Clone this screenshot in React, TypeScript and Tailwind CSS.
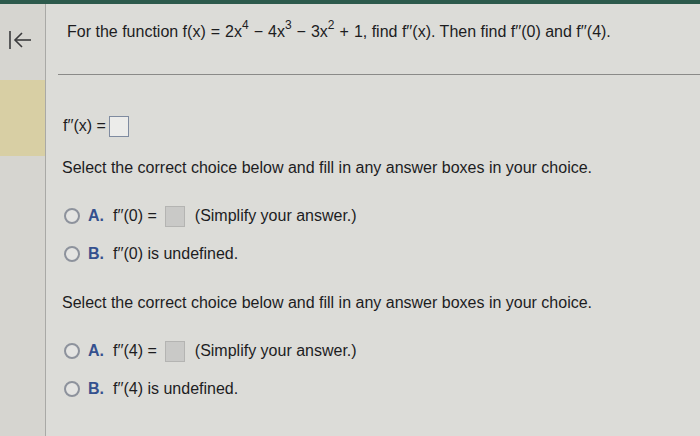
import React from "react"

type Choice = { letter: string; expr: string; box?: boolean; rest: string }

const font = { fontFamily: '"Liberation Sans", Arial, sans-serif' }

const Radio = () => (
  <span className="inline-block w-[16px] h-[16px] rounded-full border-2 border-[#8d929c] bg-[#e4e4e2]" />
)

const AnswerBox = ({ filled }: { filled?: boolean }) => (
  <span
    className={`inline-block w-[20px] h-[21px] border align-middle ${
      filled ? "bg-[#c9c9c7] border-[#b4b4b2]" : "bg-[#ececea] border-[#7f8ba0]"
    }`}
  />
)

const ChoiceRow = ({ c }: { c: Choice }) => (
  <div className="flex items-center gap-[8px] h-[24px]">
    <Radio />
    <span className="font-bold text-[#34508e] w-[17px]">{c.letter}</span>
    <span>{c.expr}</span>
    {c.box && <AnswerBox filled />}
    <span className={c.box ? "ml-[2px]" : ""}>{c.rest}</span>
  </div>
)

const Part = ({ choices }: { choices: Choice[] }) => (
  <div className="flex flex-col">
    <p>Select the correct choice below and fill in any answer boxes in your choice.</p>
    <div className="flex flex-col gap-[14px] mt-[24px] pl-[2px]">
      {choices.map((c) => (
        <ChoiceRow key={c.letter} c={c} />
      ))}
    </div>
  </div>
)

const Sup = ({ n }: { n: string }) => <sup className="text-[12px] -top-[8px]">{n}</sup>
const Op = ({ s }: { s: string }) => <span className="mx-[5px]">{s}</span>

const App = () => {
  return (
    <div className="w-[700px] h-[436px] bg-[#dcdcd8] text-[#1d1d1f] text-[16px] overflow-hidden flex flex-col" style={font}>
      <div className="h-[4px] bg-[#2d5a4c]" />
      <div className="flex flex-1">
        <div className="w-[46px] bg-[#d6d5d0] border-r border-[#a9a9a6] flex flex-col">
          <div className="h-[76px] pt-[24px] pl-[7px]">
            <svg width="26" height="24" viewBox="0 0 26 24" fill="none" stroke="#3a3a3c" strokeWidth="1.6">
              <path d="M3 3 V21" />
              <path d="M24 12 H8" />
              <path d="M15 5 L8 12 L15 19" />
            </svg>
          </div>
          <div className="h-[76px] bg-[#d8cfa4]" />
        </div>
        <div className="flex-1 flex flex-col pl-[16px]">
          <div className="h-[52px] flex items-center pt-[4px] pl-[5px]">
            <span>
              For the function f(x)<Op s="=" />2x<Sup n="4" /><Op s="−" />4x<Sup n="3" /><Op s="−" />3x<Sup n="2" />
              <Op s="+" />1, find f′′(x). Then find f′′(0) and f′′(4).
            </span>
          </div>
          <div className="h-px bg-[#8a8a88] mt-[18px] -ml-[4px]" />
          <div className="flex items-center gap-[3px] mt-[40px] h-[22px] pl-[1px]">
            <span>f′′(x) =</span>
            <AnswerBox />
          </div>
          <div className="mt-[19px]">
            <Part
              choices={[
                { letter: "A.", expr: "f′′(0) =", box: true, rest: "(Simplify your answer.)" },
                { letter: "B.", expr: "f′′(0) is undefined.", rest: "" },
              ]}
            />
          </div>
          <div className="mt-[25px]">
            <Part
              choices={[
                { letter: "A.", expr: "f′′(4) =", box: true, rest: "(Simplify your answer.)" },
                { letter: "B.", expr: "f′′(4) is undefined.", rest: "" },
              ]}
            />
          </div>
        </div>
      </div>
    </div>
  )
}

export default App
